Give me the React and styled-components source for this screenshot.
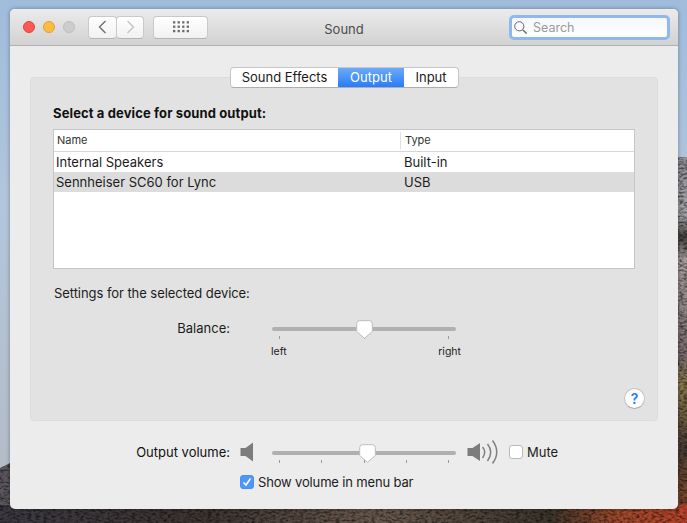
import React from 'react';
import styled, { createGlobalStyle } from 'styled-components';

const GlobalStyle = createGlobalStyle`
  html, body {
    margin: 0;
    padding: 0;
    height: 100%;
    overflow: hidden;
  }
  body {
    font-family: Inter, "Liberation Sans", sans-serif;
    font-size: 13px;
    color: #1c1c1c;
  }
`;

const Desktop = styled.div`
  position: relative;
  width: 687px;
  height: 523px;
  padding: 9px 9px 14px 10px;
  box-sizing: border-box;
  overflow: hidden;
  background: linear-gradient(180deg, #9fbcdc 0%, #b3c6dc 40%, #b4bcc6 90%);
`;

const Wallpaper = styled.svg`
  position: absolute;
  inset: 0;
`;

const Window = styled.div`
  position: relative;
  height: 500px;
  display: flex;
  flex-direction: column;
  background: #ececec;
  border-radius: 5px;
  box-shadow: 0 0 4px rgba(0, 0, 0, 0.35);
  overflow: hidden;
`;

const TitleBar = styled.div`
  position: relative;
  flex: none;
  height: 36px;
  display: flex;
  align-items: center;
  padding: 0 8px 0 13px;
  background: linear-gradient(180deg, #ebebeb, #d2d2d2);
  border-bottom: 1px solid #b1b1b1;
`;

const Light = styled.span`
  width: 12px;
  height: 12px;
  margin-right: 8px;
  border-radius: 50%;
  box-sizing: border-box;
  background: ${(p) => p.$color};
  border: 1px solid ${(p) => p.$edge};
`;

const NavGroup = styled.div`
  display: flex;
  margin-left: 5px;
`;

const ToolButton = styled.button`
  width: ${(p) => p.$width}px;
  height: 23px;
  padding: 0;
  margin-left: ${(p) => p.$gap || 0}px;
  display: flex;
  align-items: center;
  justify-content: center;
  background: linear-gradient(180deg, #ffffff, #f1f1f1);
  border: 1px solid #c9c9c9;
  border-bottom-color: #b4b4b4;
  border-radius: 4px;
`;

const Title = styled.div`
  position: absolute;
  left: 0;
  right: 0;
  text-align: center;
  color: #4c4c4c;
  font-size: 13px;
  margin-top: 3px;
`;

const SearchField = styled.div`
  position: relative;
  margin-left: auto;
  width: 161px;
  height: 25px;
  box-sizing: border-box;
  display: flex;
  align-items: center;
  gap: 6px;
  padding: 1px 0 0 2px;
  background: linear-gradient(180deg, #f6f7fa, #ffffff);
  border: 3px solid #8fb9ec;
  border-radius: 5px;
  color: #9a9a9a;
  font-size: 12.5px;
`;

const Content = styled.div`
  flex: 1;
  display: flex;
  flex-direction: column;
  padding: 21px 20px 0;
`;

const Tabs = styled.div`
  position: relative;
  z-index: 1;
  align-self: center;
  display: flex;
  height: 21px;
  background: #fff;
  border: 1px solid #c6c6c6;
  border-bottom-color: #aeaeae;
  border-radius: 4px;
  box-sizing: border-box;
  overflow: hidden;
  margin-left: 1px;
`;

const Tab = styled.div`
  width: ${(p) => p.$width}px;
  line-height: 18px;
  text-align: center;
  color: ${(p) => (p.$active ? '#fff' : '#1a1a1a')};
  background: ${(p) => (p.$active ? 'linear-gradient(180deg, #6cabfb, #2a7bf6)' : 'none')};
`;

const Panel = styled.section`
  height: 344px;
  margin-top: -11px;
  padding: 0 22px;
  box-sizing: border-box;
  display: flex;
  flex-direction: column;
  background: #e2e2e2;
  border: 1px solid #dcdcdc;
  border-radius: 4px;
`;

const Heading = styled.h2`
  margin: 26px 0 7px;
  font-size: 13px;
  line-height: 18px;
  font-weight: 700;
  letter-spacing: 0.12px;
  color: #111;
`;

const DeviceTable = styled.div`
  height: 140px;
  box-sizing: border-box;
  background: #fff;
  border: 1px solid #c6c6c6;
`;

const HeaderRow = styled.div`
  display: grid;
  grid-template-columns: 346px 1fr;
  height: 21px;
  align-items: center;
  border-bottom: 1px solid #d6d6d6;
  font-size: 11px;
  color: #333;
`;

const HeaderCell = styled.div`
  height: 17px;
  line-height: 17px;
  padding-left: ${(p) => p.$pad}px;
  border-left: ${(p) => (p.$sep ? '1px solid #e0e0e0' : 'none')};
`;

const DeviceRow = styled.div`
  display: grid;
  grid-template-columns: 348px 1fr;
  height: 20px;
  align-items: center;
  padding-left: 2px;
  background: ${(p) => (p.$selected ? '#dcdcdc' : 'transparent')};
  color: #1c1c1c;
`;

const SettingsLabel = styled.div`
  margin: 15px 0 0 1px;
  line-height: 18px;
  letter-spacing: -0.06px;
`;

const SliderRow = styled.div`
  display: flex;
  align-items: flex-start;
  margin-top: ${(p) => p.$top || 0}px;
`;

const RowLabel = styled.div`
  width: ${(p) => p.$width}px;
  text-align: right;
  line-height: 18px;
  color: ${(p) => p.$color || '#1c1c1c'};
`;

const Slider = styled.div`
  position: relative;
  width: 184px;
  margin-left: ${(p) => p.$gap}px;
  padding-top: 8px;
`;

const Track = styled.div`
  height: 4px;
  border-radius: 2px;
  background: #b0b0b0;
`;

const Thumb = styled.svg`
  position: absolute;
  top: 1px;
  left: ${(p) => p.$at}px;
`;

const Ticks = styled.div`
  display: flex;
  justify-content: space-between;
  padding: 0 7px;
  margin-top: 5px;
`;

const Tick = styled.span`
  width: 1px;
  height: 3px;
  background: #9a9a9a;
`;

const SliderEnds = styled.div`
  display: flex;
  justify-content: space-between;
  margin: 6px -5px 0 -1px;
  font-size: 10.5px;
  line-height: 13px;
  color: #1c1c1c;
`;

const HelpRow = styled.div`
  margin-top: auto;
  margin-bottom: 11px;
  margin-right: -10px;
  align-self: flex-end;
`;

const HelpButton = styled.button`
  display: block;
  width: 21px;
  height: 21px;
  padding: 0;
  border-radius: 50%;
  background: #fff;
  border: 1px solid #c2c2c2;
  border-bottom-color: #a8a8a8;
  color: #2a7bf6;
  font-family: inherit;
  font-size: 14px;
  font-weight: 600;
  line-height: 19px;
`;

const VolumeRow = styled(SliderRow)`
  margin: 22px 0 0 -20px;
`;

const IconSlot = styled.div`
  flex: none;
  margin-left: ${(p) => p.$gap}px;
  margin-top: ${(p) => p.$top}px;
  display: flex;
`;

const Box = styled.span`
  flex: none;
  width: 14px;
  height: 14px;
  display: flex;
  align-items: center;
  justify-content: center;
  box-sizing: border-box;
  border-radius: 3px;
  background: ${(p) => (p.$checked ? '#4c97f8' : '#fff')};
  border: 1px solid ${(p) => (p.$checked ? '#4a90ee' : '#b9b9b9')};
`;

const CheckLabel = styled.label`
  display: flex;
  align-items: center;
  gap: 4px;
  line-height: 18px;
  margin-left: ${(p) => p.$gap}px;
`;

const ShowVolume = styled(CheckLabel)`
  margin-top: 9px;
  letter-spacing: -0.16px;
`;

function GridIcon() {
  const dots = [];
  for (let y = 0; y < 3; y++) {
    for (let x = 0; x < 4; x++) {
      dots.push(<rect key={`${x}-${y}`} x={x * 4.7} y={y * 4.5} width="2.4" height="2.4" fill="#6e6e6e" />);
    }
  }
  return (
    <svg width="16" height="12" viewBox="0 0 16.5 12">
      {dots}
    </svg>
  );
}

function Chevron({ dir, color }) {
  return (
    <svg width="9" height="14" viewBox="0 0 9 14">
      <path
        d={dir === 'left' ? 'M7.5 1 L1.5 7 L7.5 13' : 'M1.5 1 L7.5 7 L1.5 13'}
        fill="none"
        stroke={color}
        strokeWidth="1.4"
      />
    </svg>
  );
}

function SearchIcon() {
  return (
    <svg width="13" height="13" viewBox="0 0 13 13" fill="none" stroke="#666" strokeWidth="1">
      <circle cx="5.3" cy="5.3" r="4.6" />
      <path d="M8.7 8.7 L12.6 12.6" strokeWidth="1.3" />
    </svg>
  );
}

function SliderThumb({ at }) {
  return (
    <Thumb $at={at} width="17" height="20" viewBox="0 0 17 20">
      <path
        d="M3.5 0.7 H13.5 Q16.3 0.7 16.3 3.5 V11.5 L8.5 18.3 L0.7 11.5 V3.5 Q0.7 0.7 3.5 0.7 Z"
        fill="#fff"
        stroke="#bdbdbd"
      />
    </Thumb>
  );
}

function SpeakerLow() {
  return (
    <svg width="14" height="20" viewBox="0 0 14 20">
      <path d="M0.5 6 H5.5 L13 0.5 V19.5 L5.5 14 H0.5 Z" fill="#7c7c7c" />
    </svg>
  );
}

function SpeakerHigh() {
  return (
    <svg width="32" height="24" viewBox="0 0 32 24" fill="none" stroke="#808080" strokeWidth="1.5">
      <path d="M0.5 8 H5.5 L13 3 V21 L5.5 16 H0.5 Z" fill="#7c7c7c" stroke="none" />
      <path d="M15.5 7 Q20 12 15.5 18" />
      <path d="M20.5 4 Q27 12 20.5 21" />
      <path d="M25.5 0.5 Q34 12 25.5 23.5" />
    </svg>
  );
}

export default function App() {
  return (
    <Desktop>
      <GlobalStyle />
      <Wallpaper width="687" height="523" viewBox="0 0 687 523">
        <defs>
          <linearGradient id="rightRock" x1="0" y1="0" x2="0" y2="1">
            <stop offset="0" stopColor="#8f8f96" />
            <stop offset="0.16" stopColor="#a5a3a8" />
            <stop offset="0.22" stopColor="#45423f" />
            <stop offset="0.28" stopColor="#a99f9f" />
            <stop offset="0.55" stopColor="#76696a" />
            <stop offset="0.62" stopColor="#8c7a4c" />
            <stop offset="0.8" stopColor="#4d3e35" />
            <stop offset="0.93" stopColor="#7a4a2c" />
            <stop offset="1" stopColor="#b24a2a" />
          </linearGradient>
          <linearGradient id="footRock" x1="0" y1="0" x2="1" y2="0">
            <stop offset="0" stopColor="#3c3a42" />
            <stop offset="0.3" stopColor="#3e3532" />
            <stop offset="0.55" stopColor="#6a5a4e" />
            <stop offset="0.8" stopColor="#3d352c" />
            <stop offset="0.9" stopColor="#a04a2b" />
            <stop offset="1" stopColor="#b8442c" />
          </linearGradient>
          <filter id="grain">
            <feTurbulence type="fractalNoise" baseFrequency="0.25 0.5" numOctaves="3" seed="4" />
            <feColorMatrix values="0 0 0 0 0  0 0 0 0 0  0 0 0 0 0  0 0 0 1.4 -0.55" />
            <feComposite in2="SourceGraphic" operator="in" />
          </filter>
        </defs>
        <path d="M0 468 L12 462 V523 H0 Z" fill="#5d5860" />
        <rect x="676" y="157" width="11" height="366" fill="url(#rightRock)" />
        <rect x="0" y="505" width="687" height="18" fill="url(#footRock)" />
        <path d="M0 468 L12 462 V523 H0 Z M676 157 H687 V523 H0 V505 H676 Z" fill="#000" filter="url(#grain)" />
      </Wallpaper>

      <Window>
        <TitleBar>
          <Light $color="#fc5753" $edge="#e0443e" />
          <Light $color="#fdbc40" $edge="#dea034" />
          <Light $color="#cdcdcd" $edge="#bdbdbd" />
          <NavGroup>
            <ToolButton $width={29} aria-label="Back">
              <Chevron dir="left" color="#6f6f6f" />
            </ToolButton>
            <ToolButton $width={28} $gap={-1} aria-label="Forward">
              <Chevron dir="right" color="#c4c4c4" />
            </ToolButton>
          </NavGroup>
          <ToolButton $width={55} $gap={9} aria-label="Show all">
            <GridIcon />
          </ToolButton>
          <Title>Sound</Title>
          <SearchField>
            <SearchIcon />
            <span>Search</span>
          </SearchField>
        </TitleBar>

        <Content>
          <Tabs>
            <Tab $width={107}>Sound Effects</Tab>
            <Tab $width={66} $active>
              Output
            </Tab>
            <Tab $width={54}>Input</Tab>
          </Tabs>
          <Panel>
            <Heading>Select a device for sound output:</Heading>
            <DeviceTable>
              <HeaderRow>
                <HeaderCell $pad={3}>Name</HeaderCell>
                <HeaderCell $pad={4} $sep>
                  Type
                </HeaderCell>
              </HeaderRow>
              <DeviceRow>
                <span>Internal Speakers</span>
                <span>Built-in</span>
              </DeviceRow>
              <DeviceRow $selected>
                <span>Sennheiser SC60 for Lync</span>
                <span>USB</span>
              </DeviceRow>
            </DeviceTable>
            <SettingsLabel>Settings for the selected device:</SettingsLabel>
            <SliderRow $top={17}>
              <RowLabel $width={177}>Balance:</RowLabel>
              <Slider $gap={42}>
                <Track />
                <Ticks>
                  <Tick />
                  <Tick />
                  <Tick />
                </Ticks>
                <SliderEnds>
                  <span>left</span>
                  <span>right</span>
                </SliderEnds>
                <SliderThumb at={84} />
              </Slider>
            </SliderRow>
            <HelpRow>
              <HelpButton aria-label="Help">?</HelpButton>
            </HelpRow>
          </Panel>
          <VolumeRow>
            <RowLabel $width={220} $color="#111">
              Output volume:
            </RowLabel>
            <IconSlot $gap={10} $top={-1}>
              <SpeakerLow />
            </IconSlot>
            <Slider $gap={18}>
              <Track />
              <Ticks>
                <Tick />
                <Tick />
                <Tick />
                <Tick />
                <Tick />
              </Ticks>
              <SliderThumb at={87} />
            </Slider>
            <IconSlot $gap={11} $top={-3}>
              <SpeakerHigh />
            </IconSlot>
            <CheckLabel $gap={10}>
              <Box />
              Mute
            </CheckLabel>
          </VolumeRow>
          <ShowVolume $gap={210}>
            <Box $checked>
              <svg width="10" height="10" viewBox="0 0 10 10">
                <path d="M1.5 5.5 L4 8 L8.5 1.5" fill="none" stroke="#fff" strokeWidth="1.6" />
              </svg>
            </Box>
            Show volume in menu bar
          </ShowVolume>
        </Content>
      </Window>
    </Desktop>
  );
}
